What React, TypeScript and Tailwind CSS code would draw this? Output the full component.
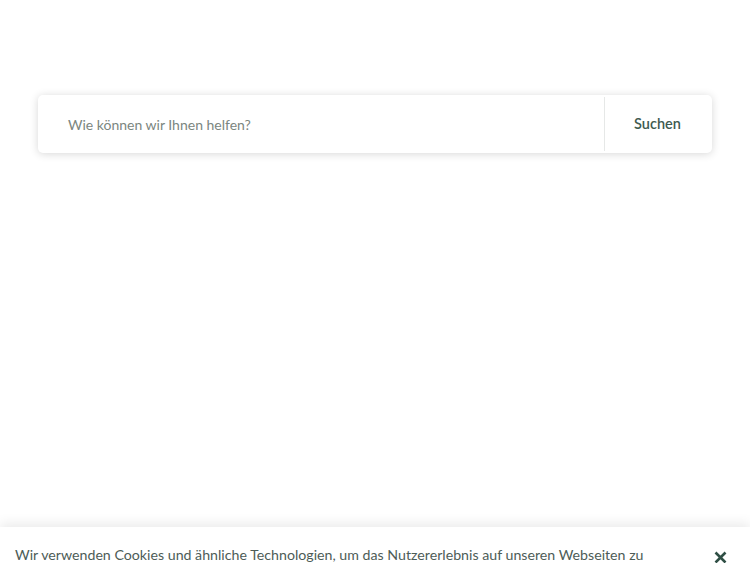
import React from "react";

export default function App() {
  return (
    <div
      className="relative w-[750px] h-[563px] overflow-hidden bg-white"
      style={{ fontFamily: "Lato, 'Open Sans', sans-serif" }}
    >
      <div className="pt-[95px] px-[38px]">
        <div className="flex h-[58px] w-[674px] rounded-[5px] bg-white shadow-[0_1px_9px_rgba(0,0,0,0.16)]">
          <div className="flex flex-1 items-center pl-[30px] text-[14px] text-[#7b8680]">
            Wie können wir Ihnen helfen?
          </div>
          <div className="my-[2px] w-px bg-[#e6e8e7]" />
          <div className="flex w-[107px] items-center justify-center pr-[2px] text-[14.5px] font-semibold text-[#3e5a50]">
            Suchen
          </div>
        </div>
      </div>
      <div className="absolute bottom-0 left-0 right-0 top-[527px] bg-white shadow-[0_-4px_12px_rgba(0,0,0,0.08)]">
        <div className="flex items-start justify-between pl-[15px] pr-[23px] pt-[18px]">
          <p className="text-[14.2px] leading-[20px] text-[#4d5c57]">
            Wir verwenden Cookies und ähnliche Technologien, um das Nutzererlebnis auf unseren Webseiten zu
          </p>
          <svg width="13" height="13" viewBox="0 0 13 13" className="mt-[6px]">
            <path d="M1.5 1.5 L11.5 11.5 M11.5 1.5 L1.5 11.5" stroke="#2f4f45" strokeWidth="2.6" strokeLinecap="butt" />
          </svg>
        </div>
      </div>
    </div>
  );
}
